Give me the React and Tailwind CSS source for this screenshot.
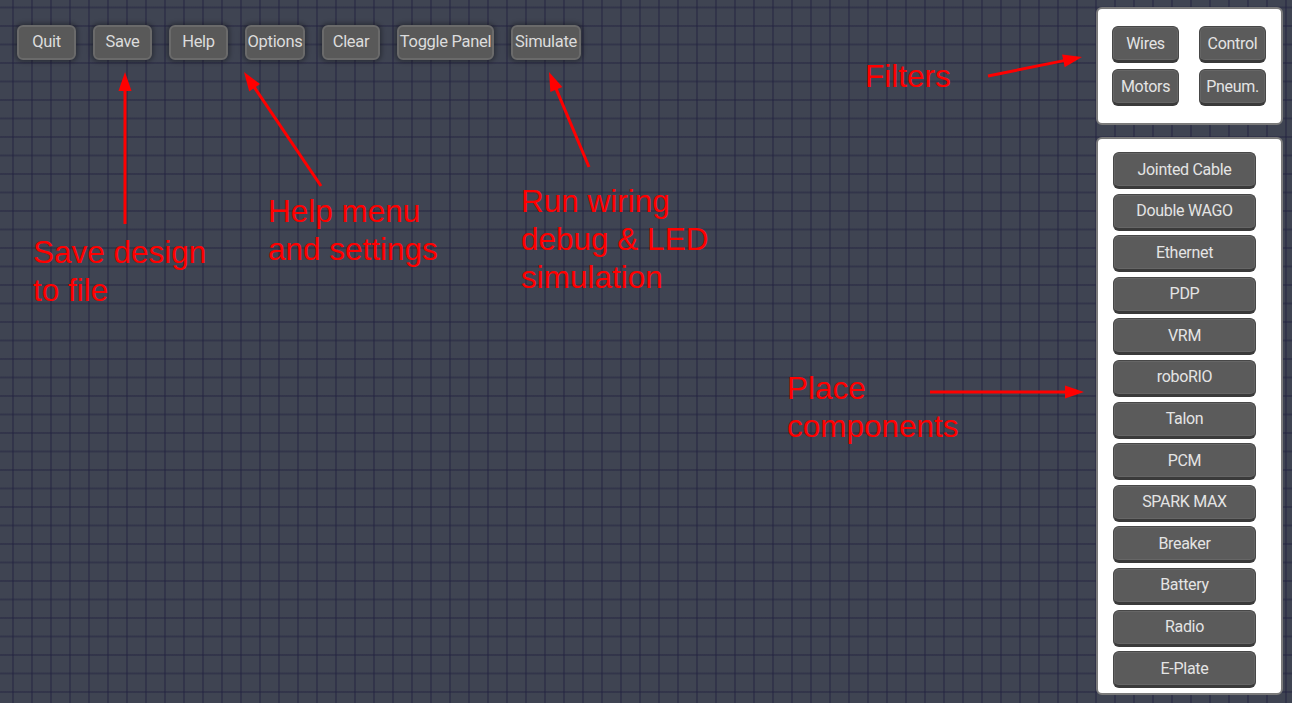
import React from 'react';

const toolbar = [
  { label: 'Quit', w: 'w-[59px]' },
  { label: 'Save', w: 'w-[59px]' },
  { label: 'Help', w: 'w-[59px]' },
  { label: 'Options', w: 'w-[60px]' },
  { label: 'Clear', w: 'w-[58px]' },
  { label: 'Toggle Panel', w: 'w-[97px]' },
  { label: 'Simulate', w: 'w-[70px]' },
];

const filters = ['Wires', 'Control', 'Motors', 'Pneum.'];

const components = [
  'Jointed Cable',
  'Double WAGO',
  'Ethernet',
  'PDP',
  'VRM',
  'roboRIO',
  'Talon',
  'PCM',
  'SPARK MAX',
  'Breaker',
  'Battery',
  'Radio',
  'E-Plate',
];

// tail -> tip, in canvas pixels
const arrows = [
  { from: [125, 224], to: [125, 72] },
  { from: [321, 186], to: [244, 72] },
  { from: [589, 167], to: [549, 72] },
  { from: [988, 76], to: [1082, 57] },
  { from: [930, 392], to: [1084, 392] },
];

const notes = [
  { text: ['Save design', 'to file'], pos: 'left-[33px] top-[233px]' },
  { text: ['Help menu', 'and settings'], pos: 'left-[268px] top-[192px]' },
  { text: ['Run wiring', 'debug & LED', 'simulation'], pos: 'left-[521px] top-[182px]' },
  { text: ['Filters'], pos: 'left-[865px] top-[57px]' },
  { text: ['Place', 'components'], pos: 'left-[787px] top-[369px]' },
];

const uiFont = "font-['Roboto',sans-serif] whitespace-nowrap tracking-[-0.3px]";

const Arrow = ({ from, to }) => {
  const dx = to[0] - from[0];
  const dy = to[1] - from[1];
  const len = Math.hypot(dx, dy);
  const ux = dx / len;
  const uy = dy / len;
  const headLen = 19;
  const half = 6.5;
  const bx = to[0] - ux * headLen;
  const by = to[1] - uy * headLen;
  const pts = [
    `${to[0]},${to[1]}`,
    `${bx - uy * half},${by + ux * half}`,
    `${bx + uy * half},${by - ux * half}`,
  ].join(' ');
  return (
    <g>
      <line x1={from[0]} y1={from[1]} x2={bx + ux * 2} y2={by + uy * 2} stroke="#ff0000" strokeWidth="3" />
      <polygon points={pts} fill="#ff0000" />
    </g>
  );
};

const ToolButton = ({ label, w }) => (
  <button
    className={`${w} h-[35px] flex items-center justify-center rounded-[6px] bg-[#595959] border-2 border-[#6a6a6a] shadow-[0_0_4px_2px_rgba(0,0,0,0.3)] text-[16.5px] text-[#dcdcdc] ${uiFont}`}
  >
    {label}
  </button>
);

const PanelButton = ({ label, w }) => (
  <button
    className={`${w} h-[37px] flex items-center justify-center rounded-[6px] bg-[#5b5b5b] border border-[#474747] border-b-[3px] border-b-[#3a3a3a] shadow-[inset_0_0_0_1px_#666666] text-[16px] leading-none text-[#e4e4e4] ${uiFont}`}
  >
    {label}
  </button>
);

const App = () => {
  return (
    <div className="relative w-[1292px] h-[703px] overflow-hidden flex justify-between bg-[#3f4452] bg-[linear-gradient(to_right,rgba(34,34,64,0.45)_2px,transparent_2px),linear-gradient(to_bottom,rgba(34,34,64,0.45)_2px,transparent_2px)] bg-size-[19px_18.5px] bg-position-[12px_6.5px]">
      {/* top toolbar */}
      <div className="flex items-start gap-[17px] pl-[17px] pt-[25px]">
        {toolbar.map((b) => (
          <ToolButton key={b.label} label={b.label} w={b.w} />
        ))}
      </div>

      {/* right side panels */}
      <div className="w-[187px] mr-[9px] pt-[7px] flex flex-col gap-[12px]">
        <div className="h-[118px] rounded-[6px] bg-white border-2 border-[#7b7b7b] pl-[14px] pt-[17px]">
          <div className="grid grid-cols-[67px_67px] gap-x-[20px] gap-y-[6px]">
            {filters.map((f) => (
              <PanelButton key={f} label={f} w="w-[67px]" />
            ))}
          </div>
        </div>
        <div className="h-[558px] rounded-[6px] bg-white border-2 border-[#7b7b7b] pl-[15px] pt-[13px] flex flex-col gap-[4.6px]">
          {components.map((c) => (
            <PanelButton key={c} label={c} w="w-[143px]" />
          ))}
        </div>
      </div>

      {/* annotations drawn over the canvas */}
      <svg className="absolute inset-0 pointer-events-none" width="1292" height="703">
        {arrows.map((a, i) => (
          <Arrow key={i} from={a.from} to={a.to} />
        ))}
      </svg>
      {notes.map((n) => (
        <div
          key={n.text[0]}
          className={`absolute ${n.pos} text-[31.5px] leading-[38px] text-[#ff0000] whitespace-nowrap font-['Liberation_Sans',Arial,sans-serif]`}
        >
          {n.text.map((line) => (
            <div key={line}>{line}</div>
          ))}
        </div>
      ))}
    </div>
  );
};

export default App;
